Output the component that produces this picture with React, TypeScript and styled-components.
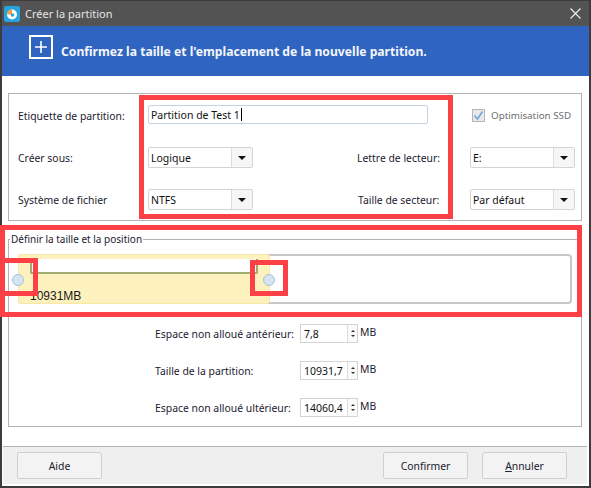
import React from "react";
import styled, { createGlobalStyle } from "styled-components";

const Global = createGlobalStyle`
  html, body { margin: 0; padding: 0; background: #fff; }
  * { box-sizing: border-box; }
`;
const UI = `"Noto Sans", "DejaVu Sans", sans-serif`;

const Win = styled.div`
  position: relative; width: 591px; height: 488px; display: flex; flex-direction: column;
  background: #fff; border: solid #3c3c3c; border-width: 1px 2px 2px 2px; color: #1c2030;
  font-family: ${UI}; font-size: 10.4px;
`;
const TitleBar = styled.div`
  height: 25px; background: #535353; display: flex; align-items: center; padding: 0 8px 0 2px;
  color: #e6e6e6; flex: none;
`;
const AppIcon = styled.svg` width: 16px; height: 16px; margin-right: 5px; flex: none; `;
const TitleText = styled.span` flex: 1; font-size: 11px; `;
const Banner = styled.div`
  height: 50px; background: #2f65c0; display: flex; align-items: center; padding: 0 0 0 27px;
  flex: none; color: #f4f6fb; font-weight: bold; font-size: 12.15px;
`;
const PlusIcon = styled.svg` width: 24px; height: 24px; margin: 0 8px 8px 0; flex: none; `;
const Content = styled.div` flex: 1; padding: 17px 7px 0 6px; display: flex; flex-direction: column; `;
const Group = styled.div`
  border: 1px solid #b4b4b4; height: 128px; padding: 11px 0 0 9px; display: grid;
  grid-template-columns: 130px 105px 217px 104px; grid-template-rows: 21px 21px 21px; row-gap: 21px;
  align-items: center;
`;
const Label = styled.span<{ $indent?: number }>`
  padding-left: ${(p) => p.$indent ?? 0}px; white-space: nowrap;
`;
const TextInput = styled.div`
  grid-column: 2 / 4; align-self: start; width: 280px; height: 19px; border: 1px solid #c3d3df; border-radius: 2px;
  padding-left: 2px; display: flex; align-items: center; font-size: 10.5px; color: #111;
`;
const Caret = styled.span` display: inline-block; width: 1px; height: 13px; background: #000; margin-left: 1px; `;
const CheckRow = styled.label` display: flex; align-items: center; gap: 6px; padding-left: 2px; color: #6d6d6d; white-space: nowrap; font-size: 9.8px; `;
const CheckBox = styled.span`
  width: 13px; height: 13px; border: 1px solid #b5b5b5; background: #e8e8e8; display: flex;
  align-items: center; justify-content: center; flex: none;
`;
const Combo = styled.div`
  width: 105px; height: 21px; display: flex; border: 1px solid #d4d4d4; border-radius: 2px; background: #fff; color: #111; font-size: 10.5px;
`;
const ComboValue = styled.span` flex: 1; padding-left: 2px; display: flex; align-items: center; `;
const ComboArrow = styled.span`
  width: 21px; border-left: 1px solid #dcdcdc; background: #f6f6f6; display: flex; align-items: center; justify-content: center;
  &::after { content: ""; border: solid transparent; border-width: 4px 4px 0; border-top-color: #111; }
`;
const Fieldset = styled.fieldset`
  margin: 12px 0 0; padding: 0; border: 1px solid #b4b4b4; height: 194px; min-width: 0;
  display: flex; flex-direction: column;
`;
const Legend = styled.legend` padding: 0 1px; margin-left: 1px; line-height: 12px; color: #1c2030; font-size: 10px; `;
const Track = styled.div`
  position: relative; margin: 9px 9px 0 9px; height: 50px; border: 2px solid #c8c8c8; border-radius: 4px; background: #fff; flex: none;
`;
const Used = styled.div`
  position: absolute; left: -2px; top: -2px; bottom: -2px; width: 252px; background: #fdf1bd; border: 1px solid #f9e7a4; border-radius: 3px;
`;
const UsedBar = styled.div`
  margin: 4px 11px 0 11px; height: 15px; background: #fff; border: 2px solid #9fac73; border-top: none; border-radius: 0 0 2px 2px;
`;
const UsedText = styled.div`
  margin: 15px 0 0 11px; font-family: "Liberation Sans", sans-serif; font-size: 12px; color: #1a1a1a;
`;
const Handle = styled.span<{ $x: number }>`
  position: absolute; left: ${(p) => p.$x}px; top: 18px; width: 12px; height: 12px; border-radius: 50%;
  background: #d6e4f2; border: 1px solid #a9c3dc;
`;
const Spins = styled.div`
  margin: 20px 0 0 146px; display: grid; grid-template-columns: 145px 58px auto; grid-auto-rows: 19px; row-gap: 18px; align-items: center; justify-content: start;
`;
const Spin = styled.div` height: 19px; border: 1px solid #d4d4d4; display: flex; color: #111; font-size: 10.5px; `;
const SpinValue = styled.span` flex: 1; padding-left: 3px; display: flex; align-items: center; `;
const SpinArrows = styled.span`
  width: 10px; border-left: 1px solid #dcdcdc; background: #fafafa; display: flex; flex-direction: column; align-items: center; justify-content: space-around; padding: 3px 0;
  i { display: block; border: solid transparent; border-width: 0 2px 2px; border-bottom-color: #333; }
  i + i { border-width: 2px 2px 0; border-top-color: #333; border-bottom-color: transparent; }
`;
const Unit = styled.span` padding-left: 2px; margin-top: -3px; `;
const Footer = styled.div`
  height: 38px; margin: 0 2px 2px 1px; flex: none; background: #efefef; border-top: 1px solid #b4b4b4; display: flex; align-items: flex-start; padding: 5px 20px 0 14px; gap: 14px;
`;
const Button = styled.div<{ $push?: boolean }>`
  width: 85px; height: 27px; border: 1px solid #d0d0d0; border-radius: 2px; background: #f3f3f3; display: flex; align-items: center; justify-content: center; color: #1c2030;
  margin-left: ${(p) => (p.$push ? "auto" : "0")};
  u { text-underline-offset: 1px; }
`;
const RedBox = styled.div<{ $l: number; $t: number; $w: number; $h: number }>`
  position: absolute; left: ${(p) => p.$l - 2}px; top: ${(p) => p.$t - 1}px; width: ${(p) => p.$w}px; height: ${(p) => p.$h}px;
  border: 5px solid #fb4146; pointer-events: none;
`;

export default function App() {
  const combo = (v: string) => (
    <Combo><ComboValue>{v}</ComboValue><ComboArrow /></Combo>
  );
  const spin = (label: string, v: string) => (
    <>
      <Label>{label}</Label>
      <Spin><SpinValue>{v}</SpinValue><SpinArrows><i /><i /></SpinArrows></Spin>
      <Unit>MB</Unit>
    </>
  );
  return (
    <Win>
      <Global />
      <TitleBar>
        <AppIcon viewBox="0 0 16 16">
          <rect width="16" height="16" rx="2" fill="#27a3de" />
          <circle cx="8" cy="8.5" r="5" fill="#fff" />
          <path d="M3 8.5a5 5 0 0 1 5-5v5z" fill="#f0a030" />
          <circle cx="8.5" cy="9" r="1.8" fill="#27a3de" />
        </AppIcon>
        <TitleText>Créer la partition</TitleText>
        <svg width="11" height="11" viewBox="0 0 11 11"><path d="M.5.5l10 10M10.5.5l-10 10" stroke="#f2f2f2" strokeWidth="1.1" /></svg>
      </TitleBar>
      <Banner>
        <PlusIcon viewBox="0 0 24 24">
          <rect x="1" y="1" width="22" height="22" fill="none" stroke="#fff" strokeWidth="2" />
          <path d="M12 6v12M6 12h12" stroke="#fff" strokeWidth="1.6" />
        </PlusIcon>
        Confirmez la taille et l'emplacement de la nouvelle partition.
      </Banner>
      <Content>
        <Group>
          <Label>Etiquette de partition:</Label>
          <TextInput>Partition de Test 1<Caret /></TextInput>
          <CheckRow>
            <CheckBox>
              <svg width="11" height="11" viewBox="0 0 11 11"><path d="M1.5 5.5l3 3.5 5-7.5" fill="none" stroke="#6ea5d8" strokeWidth="1.6" /></svg>
            </CheckBox>
            Optimisation SSD
          </CheckRow>
          <Label>Créer sous:</Label>
          {combo("Logique")}
          <Label $indent={104}>Lettre de lecteur:</Label>
          {combo("E:")}
          <Label>Système de fichier</Label>
          {combo("NTFS")}
          <Label $indent={105}>Taille de secteur:</Label>
          {combo("Par défaut")}
        </Group>
        <Fieldset>
          <Legend>Définir la taille et la position</Legend>
          <Track>
            <Used>
              <UsedBar />
              <UsedText>10931MB</UsedText>
            </Used>
            <Handle $x={-8} />
            <Handle $x={243} />
          </Track>
          <Spins>
            {spin("Espace non alloué antérieur:", "7,8")}
            {spin("Taille de la partition:", "10931,7")}
            {spin("Espace non alloué ultérieur:", "14060,4")}
          </Spins>
        </Fieldset>
      </Content>
      <Footer>
        <Button>Aide</Button>
        <Button $push>Confirmer</Button>
        <Button><span><u>A</u>nnuler</span></Button>
      </Footer>
      <RedBox $l={139} $t={95} $w={314} $h={124} />
      <RedBox $l={0} $t={225} $w={582} $h={92} />
      <RedBox $l={0} $t={258} $w={38} $h={38} />
      <RedBox $l={250} $t={260} $w={38} $h={36} />
    </Win>
  );
}
